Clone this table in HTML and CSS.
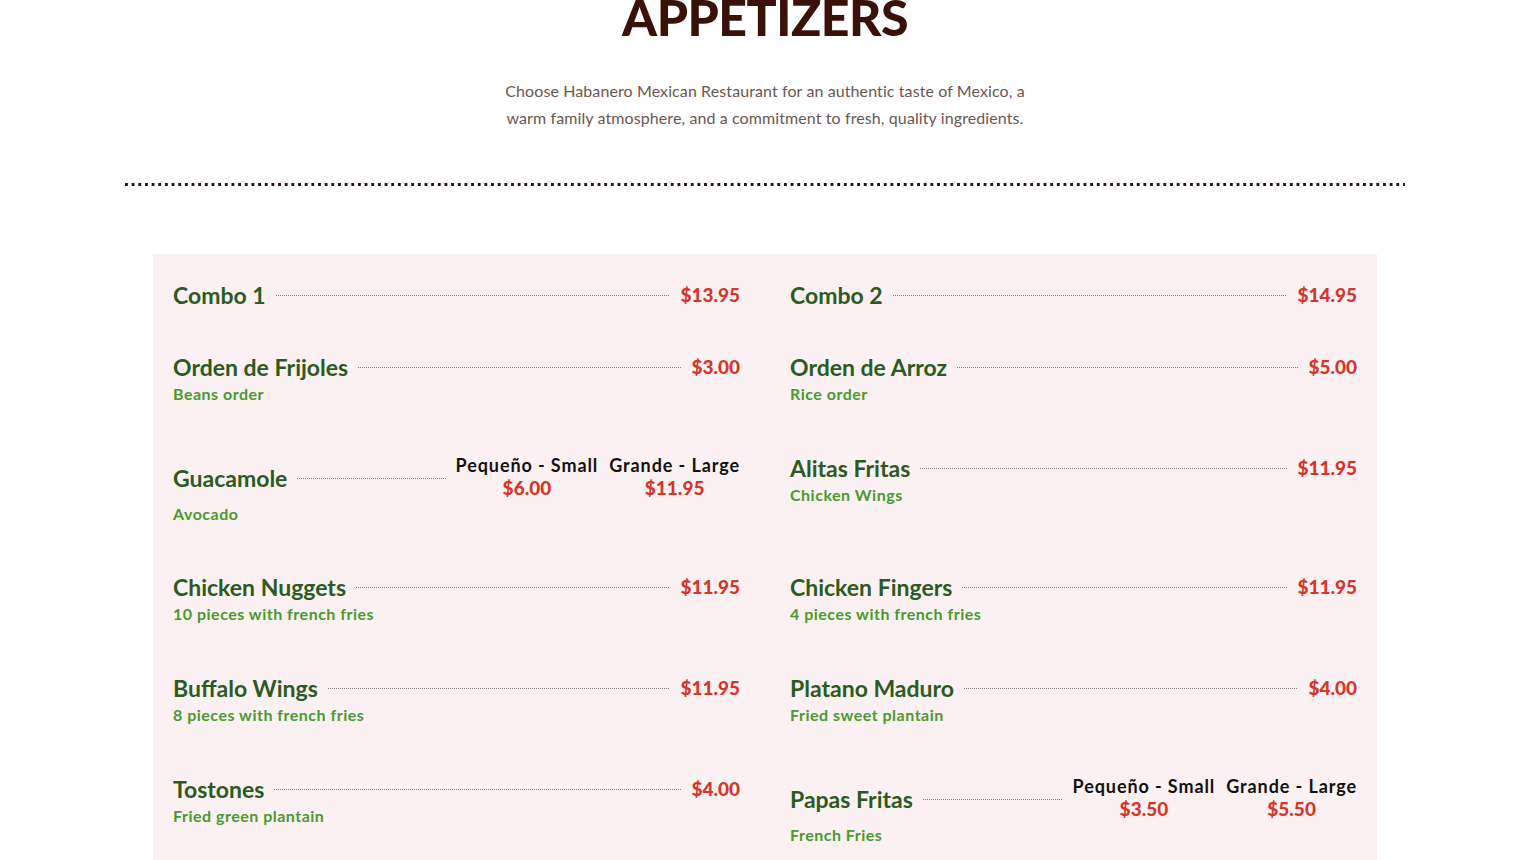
FILE: index.html
```html
<!DOCTYPE html>
<html lang="en">
<head>
<meta charset="utf-8">
<title>Appetizers</title>
<link rel="stylesheet" href="styles.css">
</head>
<body>
<section class="menu-section">
  <header class="section-head">
    <h1 class="title">APPETIZERS</h1>
    <p class="intro">Choose Habanero Mexican Restaurant for an authentic taste of Mexico, a warm family atmosphere, and a commitment to fresh, quality ingredients.</p>
    <div class="divider"></div>
  </header>

  <div class="card">
    <div class="grid">
      <div class="item">
        <div class="item-head"><span class="name">Combo 1</span><span class="leader"></span><span class="price">$13.95</span></div>
      </div>
      <div class="item">
        <div class="item-head"><span class="name">Combo 2</span><span class="leader"></span><span class="price">$14.95</span></div>
      </div>

      <div class="item">
        <div class="item-head"><span class="name">Orden de Frijoles</span><span class="leader"></span><span class="price">$3.00</span></div>
        <div class="desc">Beans order</div>
      </div>
      <div class="item">
        <div class="item-head"><span class="name">Orden de Arroz</span><span class="leader"></span><span class="price">$5.00</span></div>
        <div class="desc">Rice order</div>
      </div>

      <div class="item">
        <div class="item-head"><span class="name">Guacamole</span><span class="leader"></span>
          <div class="sizes">
            <div class="size"><span class="size-label">Pequeño - Small</span><span class="size-price">$6.00</span></div>
            <div class="size"><span class="size-label">Grande - Large</span><span class="size-price">$11.95</span></div>
          </div>
        </div>
        <div class="desc desc-tight">Avocado</div>
      </div>
      <div class="item">
        <div class="item-head"><span class="name">Alitas Fritas</span><span class="leader"></span><span class="price">$11.95</span></div>
        <div class="desc">Chicken Wings</div>
      </div>

      <div class="item">
        <div class="item-head"><span class="name">Chicken Nuggets</span><span class="leader"></span><span class="price">$11.95</span></div>
        <div class="desc">10 pieces with french fries</div>
      </div>
      <div class="item">
        <div class="item-head"><span class="name">Chicken Fingers</span><span class="leader"></span><span class="price">$11.95</span></div>
        <div class="desc">4 pieces with french fries</div>
      </div>

      <div class="item">
        <div class="item-head"><span class="name">Buffalo Wings</span><span class="leader"></span><span class="price">$11.95</span></div>
        <div class="desc">8 pieces with french fries</div>
      </div>
      <div class="item">
        <div class="item-head"><span class="name">Platano Maduro</span><span class="leader"></span><span class="price">$4.00</span></div>
        <div class="desc">Fried sweet plantain</div>
      </div>

      <div class="item">
        <div class="item-head"><span class="name">Tostones</span><span class="leader"></span><span class="price">$4.00</span></div>
        <div class="desc">Fried green plantain</div>
      </div>
      <div class="item">
        <div class="item-head"><span class="name">Papas Fritas</span><span class="leader"></span>
          <div class="sizes">
            <div class="size"><span class="size-label">Pequeño - Small</span><span class="size-price">$3.50</span></div>
            <div class="size"><span class="size-label">Grande - Large</span><span class="size-price">$5.50</span></div>
          </div>
        </div>
        <div class="desc desc-tight">French Fries</div>
      </div>
    </div>
  </div>
</section>
</body>
</html>
```

FILE: styles.css
```css
* { box-sizing: border-box; }

html, body {
  margin: 0;
  padding: 0;
  background: #ffffff;
}

body {
  font-family: "Lato", "Liberation Sans", sans-serif;
  overflow: hidden;
}

.menu-section {
  width: 100%;
}

.section-head {
  display: flex;
  flex-direction: column;
  align-items: center;
}

.title {
  margin: -9px 0 0;
  font-size: 50px;
  line-height: 52px;
  font-weight: 900;
  color: #3a1109;
  letter-spacing: -0.5px;
}

.intro {
  margin: 34px 0 0;
  max-width: 540px;
  text-align: center;
  font-size: 16px;
  line-height: 27px;
  color: #6b5752;
  letter-spacing: 0.1px;
}

.divider {
  margin-top: 52px;
  width: 1280px;
  height: 3px;
  background-image: linear-gradient(to right, #2d140d 0, #2d140d 3px, transparent 3px);
  background-size: 6.67px 3px;
  background-repeat: repeat-x;
}

.card {
  margin: 68px auto 0;
  width: 1224px;
  background: #fbf1f2;
  padding: 26px 20px 40px;
}

.grid {
  display: grid;
  grid-template-columns: 1fr 1fr;
  column-gap: 50px;
  row-gap: 42px;
}

.item-head {
  display: flex;
  align-items: center;
  min-height: 30px;
}

.name {
  font-size: 23px;
  line-height: 30px;
  font-weight: 700;
  color: #2c5a22;
  white-space: nowrap;
}

.leader {
  flex: 1;
  margin: 0 10px;
  height: 1px;
  background-image: linear-gradient(to right, #7d7a78 0, #7d7a78 1px, transparent 1px);
  background-size: 2px 1px;
  background-repeat: repeat-x;
}

.price {
  font-size: 19px;
  line-height: 30px;
  font-weight: 900;
  color: #d5362c;
  white-space: nowrap;
}

.sizes {
  display: flex;
  gap: 11px;
  padding-bottom: 4px;
}

.size {
  display: flex;
  flex-direction: column;
  align-items: center;
}

.size-label {
  font-size: 18px;
  line-height: 24px;
  font-weight: 700;
  color: #111111;
  white-space: nowrap;
  letter-spacing: 0.9px;
}

.size-price {
  font-size: 19px;
  line-height: 22px;
  font-weight: 900;
  color: #d5362c;
}

.desc {
  font-size: 16px;
  line-height: 24px;
  padding-bottom: 5px;
  font-weight: 700;
  color: #4a9a2f;
  letter-spacing: 0.5px;
}

.desc-tight {
  margin-top: -1px;
  padding-bottom: 4px;
}
```
